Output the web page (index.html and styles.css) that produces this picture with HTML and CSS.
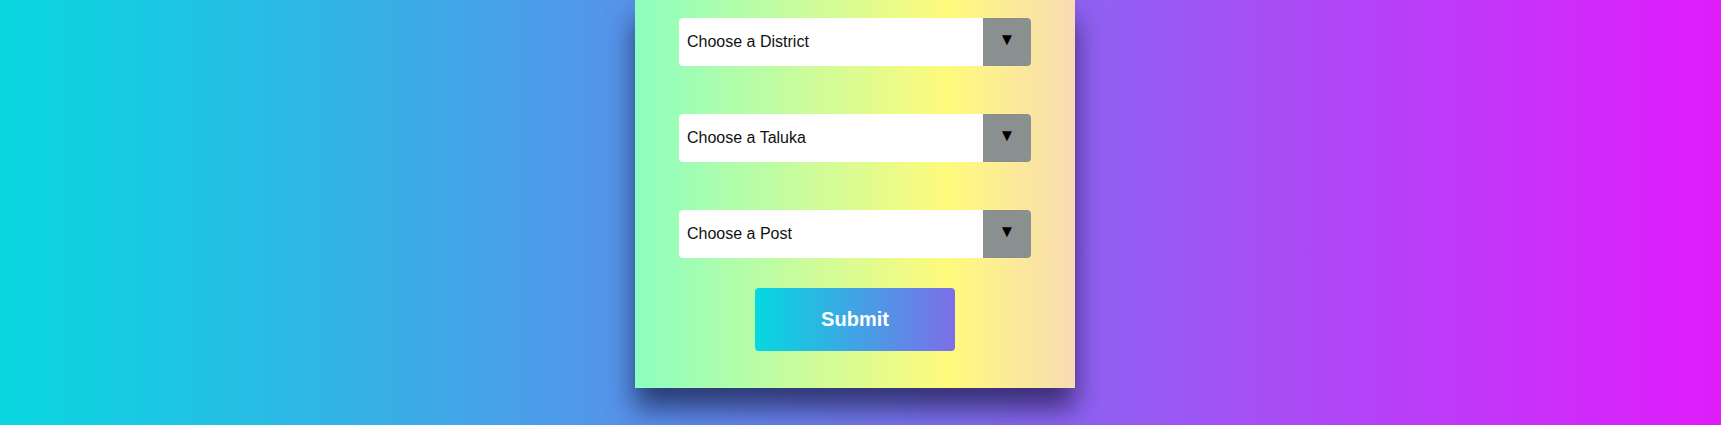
FILE: index.html
```html
<!DOCTYPE html>
<html lang="en">
<head>
<meta charset="utf-8">
<title>Address form</title>
<link rel="stylesheet" href="styles.css">
</head>
<body>
<main class="page">
  <form class="card">
    <div class="select">
      <span class="select-label">Choose a District</span>
      <span class="select-arrow">▼</span>
    </div>
    <div class="select">
      <span class="select-label">Choose a Taluka</span>
      <span class="select-arrow">▼</span>
    </div>
    <div class="select">
      <span class="select-label">Choose a Post</span>
      <span class="select-arrow">▼</span>
    </div>
    <button type="button" class="submit">Submit</button>
  </form>
</main>
</body>
</html>
```

FILE: styles.css
```css
html, body {
  margin: 0;
  padding: 0;
}
body {
  height: 425px;
  overflow: hidden;
  background: linear-gradient(90deg, #08d8e0 0%, #e01cfd 100%);
  font-family: "Liberation Sans", Arial, sans-serif;
}
.page {
  display: flex;
  justify-content: center;
}
.card {
  box-sizing: border-box;
  width: 440px;
  margin-right: 11px;
  padding: 18px 44px 37px;
  display: flex;
  flex-direction: column;
  align-items: center;
  gap: 48px;
  background: linear-gradient(90deg, #8cffc0 0%, #fffa7c 71%, #f8dbb4 100%);
  box-shadow: 0 20px 26px rgba(15, 15, 50, 0.65);
}
.select {
  width: 352px;
  height: 48px;
  display: flex;
  align-items: center;
  background: #fff;
  border-radius: 4px;
  overflow: hidden;
}
.select-label {
  flex: 1;
  padding-left: 8px;
  font-size: 16px;
  color: #111;
}
.select-arrow {
  width: 48px;
  height: 48px;
  display: flex;
  align-items: center;
  justify-content: center;
  background: #8a8f90;
  color: #000;
  font-size: 17px;
  padding-bottom: 4px;
  box-sizing: border-box;
}
.card .submit {
  margin-top: -18px;
  width: 200px;
  height: 63px;
  border: none;
  border-radius: 4px;
  background: linear-gradient(90deg, #04d9e0 0%, #7d6ee8 100%);
  color: #fff;
  font-family: "Liberation Sans", Arial, sans-serif;
  font-weight: bold;
  font-size: 20px;
}
```
